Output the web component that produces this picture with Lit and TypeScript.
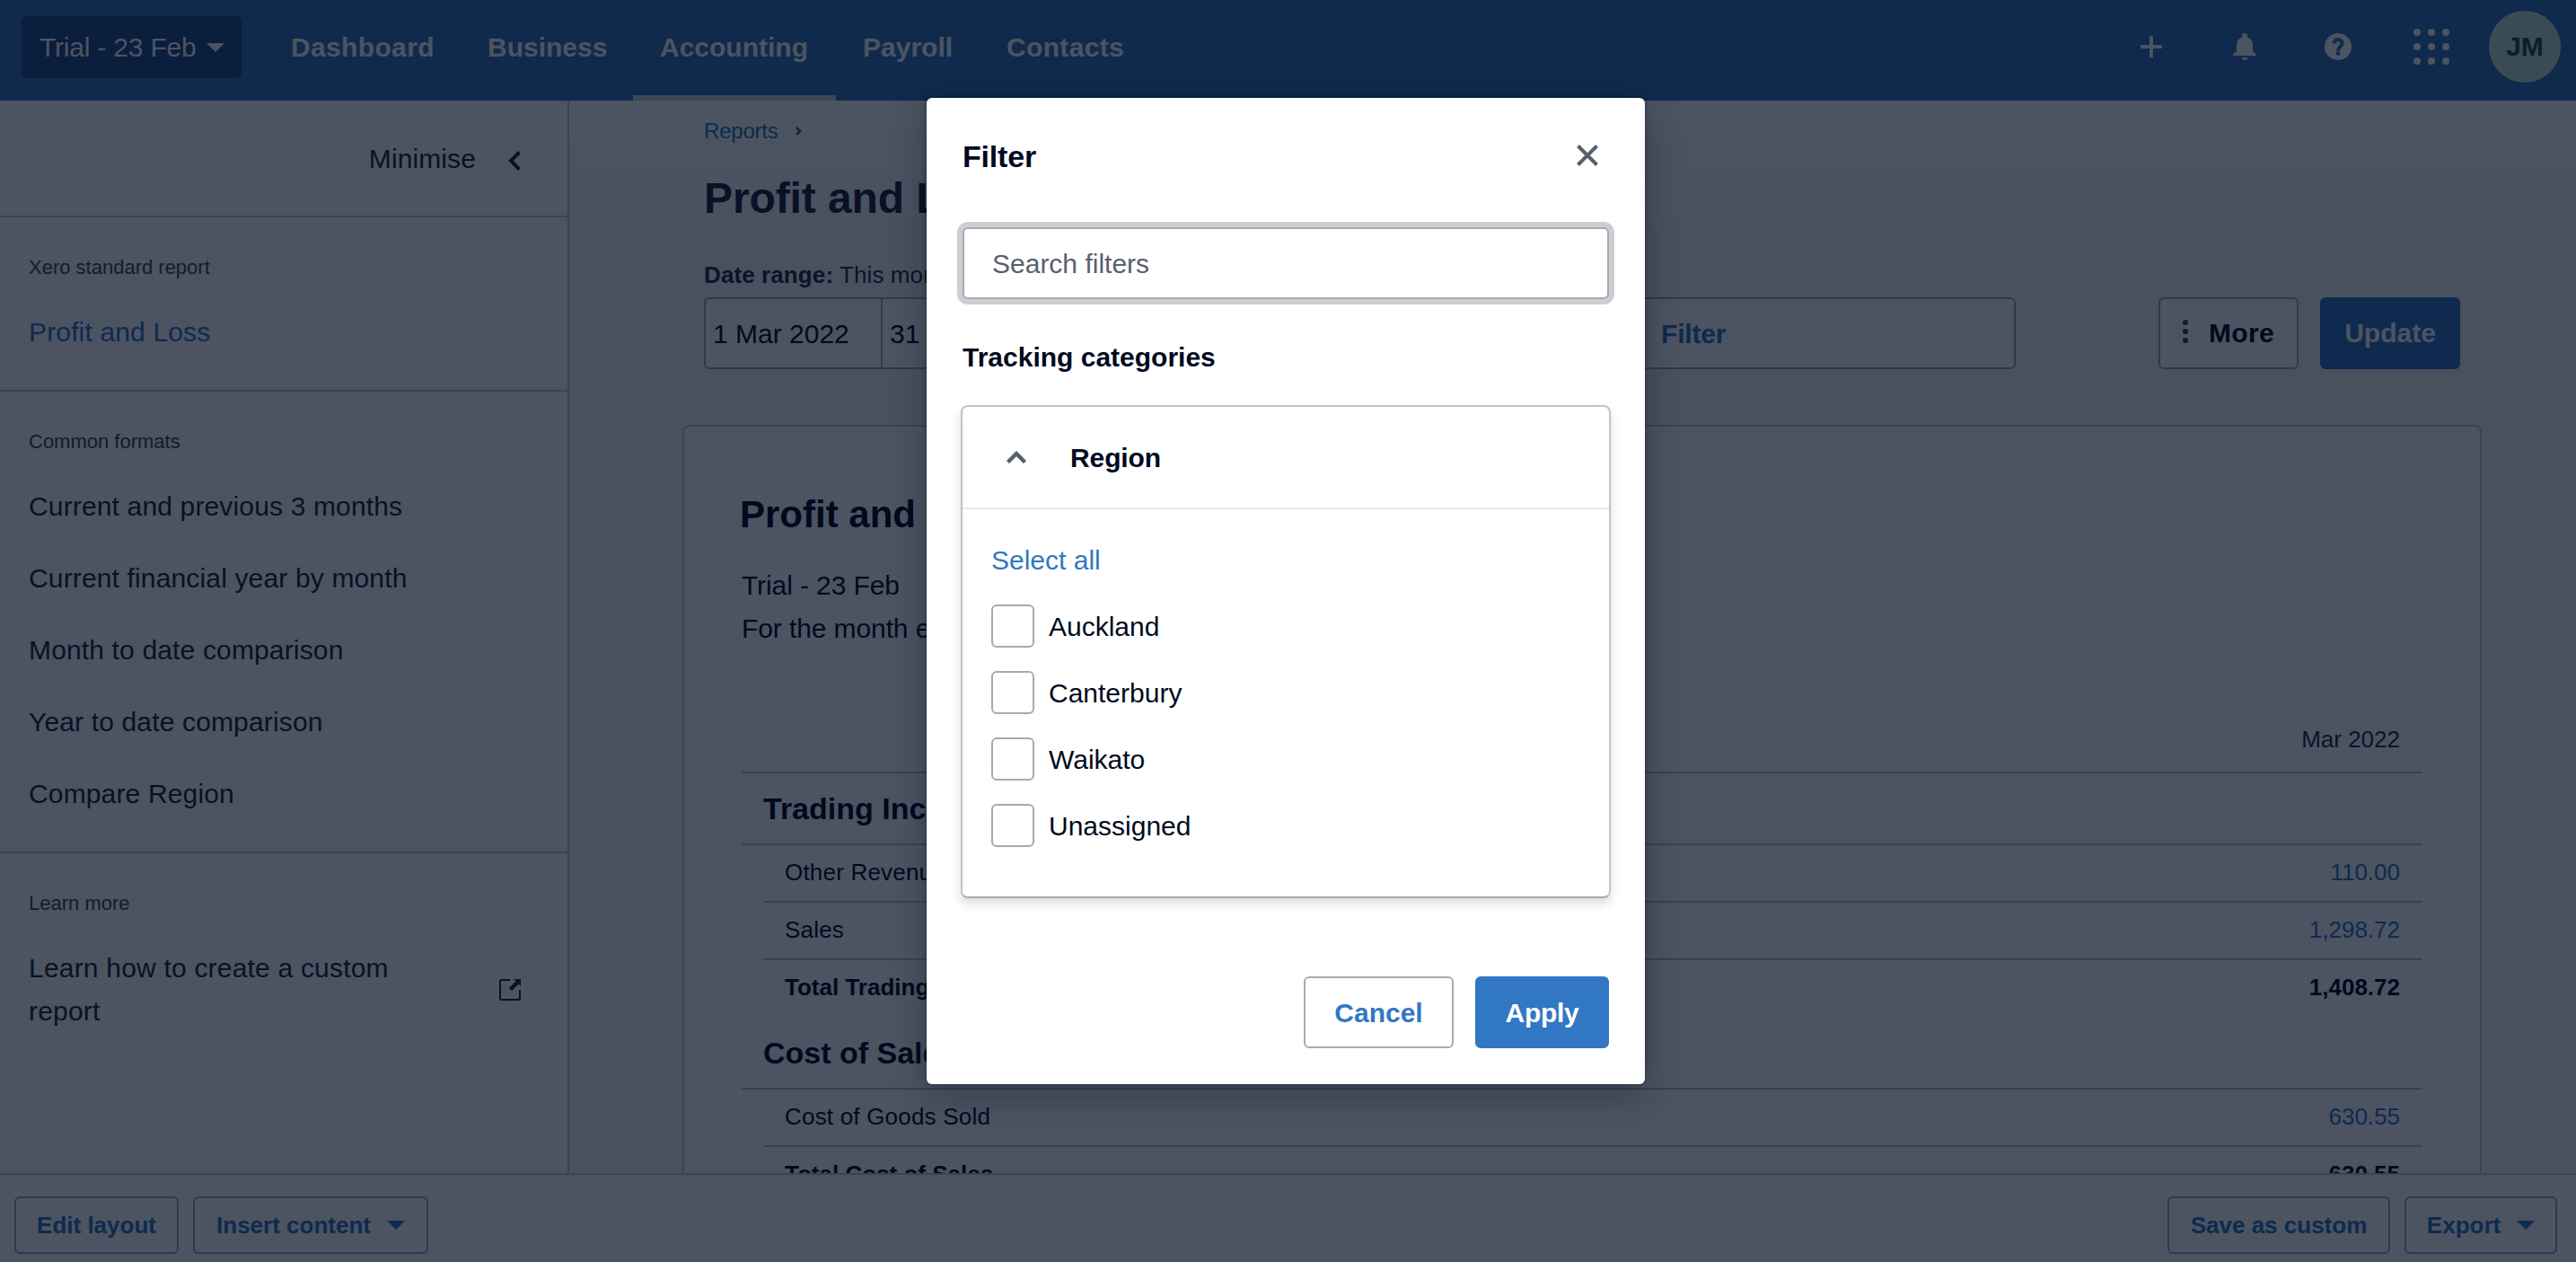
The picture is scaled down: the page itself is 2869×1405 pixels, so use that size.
import { LitElement, html, css, svg } from "lit";
import { customElement, property } from "lit/decorators.js";

const NAV = ["Dashboard", "Business", "Accounting", "Payroll", "Contacts"];

const FORMATS = [
	"Current and previous 3 months",
	"Current financial year by month",
	"Month to date comparison",
	"Year to date comparison",
	"Compare Region",
];

type Row = { kind: "section" | "line" | "total"; label: string; amount?: string };

const ROWS: Row[] = [
	{ kind: "section", label: "Trading Income" },
	{ kind: "line", label: "Other Revenue", amount: "110.00" },
	{ kind: "line", label: "Sales", amount: "1,298.72" },
	{ kind: "total", label: "Total Trading Income", amount: "1,408.72" },
	{ kind: "section", label: "Cost of Sales" },
	{ kind: "line", label: "Cost of Goods Sold", amount: "630.55" },
	{ kind: "total", label: "Total Cost of Sales", amount: "630.55" },
];

const REGIONS = ["Auckland", "Canterbury", "Waikato", "Unassigned"];

const caret = html`<svg class="caret" width="20" height="10" viewBox="0 0 20 10">
	<path d="M0 0h20L10 10z" fill="currentColor" />
</svg>`;

@customElement("filter-dialog")
export class FilterDialog extends LitElement {
	static override styles = css`
		:host {
			display: flex;
			flex-direction: column;
			box-sizing: border-box;
			width: 800px;
			height: 1098px;
			padding: 0 40px 40px;
			border-radius: 6px;
			background: #fff;
			color: #000a1e;
			font-size: 30px;
			box-shadow: 0 0 4px rgba(0, 10, 30, 0.4), 0 12px 40px rgba(0, 10, 30, 0.3);
		}
		header {
			display: flex;
			align-items: center;
			justify-content: space-between;
			height: 128px;
			padding-right: 12px;
		}
		h2 {
			margin: 0;
			padding-top: 2px;
			font-size: 34px;
			letter-spacing: -0.2px;
		}
		h3 {
			margin: 0;
			font-size: 30px;
			line-height: 40px;
			padding: 45px 0 33px;
		}
		.search {
			box-sizing: border-box;
			width: 720px;
			height: 80px;
			margin-top: 16px;
			padding: 2px 31px 0;
			border: 2px solid #a6a9b0;
			border-radius: 6px;
			outline: none;
			box-shadow: 0 0 0 6px #ccced2;
			background: #fff;
			font: inherit;
		}
		.search::placeholder {
			color: #59606d;
			opacity: 1;
		}
		.panel {
			width: 720px;
			height: 545px;
			margin-left: -2px;
			border: 2px solid #bfc2c8;
			border-bottom-color: #a6a9b0;
			border-radius: 8px;
			box-shadow: 0 6px 12px rgba(0, 10, 30, 0.14);
		}
		.summary {
			display: flex;
			align-items: center;
			gap: 49px;
			height: 112px;
			padding-left: 49px;
			border-bottom: 2px solid #e6e7e9;
			font-weight: bold;
			letter-spacing: -0.1px;
		}
		.name {
			padding-top: 2px;
		}
		.options {
			display: flex;
			flex-direction: column;
			padding: 37px 32px;
		}
		.all {
			color: #3277c4;
			line-height: 40px;
			margin-bottom: 16px;
		}
		label {
			display: flex;
			align-items: center;
			gap: 16px;
			height: 74px;
		}
		.box {
			box-sizing: border-box;
			width: 48px;
			height: 48px;
			border: 2px solid #a6a9b0;
			border-radius: 6px;
		}
		footer {
			display: flex;
			justify-content: flex-end;
			gap: 24px;
			margin-top: auto;
		}
		button {
			box-sizing: border-box;
			height: 80px;
			padding: 1px 0 0;
			border: 2px solid #a6a9b0;
			border-radius: 6px;
			background: #fff;
			color: #3277c4;
			font: bold 30px "Liberation Sans", Arial, sans-serif;
		}
		.cancel {
			width: 167px;
		}
		.apply {
			width: 149px;
			border-color: #3277c4;
			background: #3277c4;
			color: #fff;
			letter-spacing: -0.3px;
		}
	`;

	override render() {
		return html`
			<header>
				<h2>Filter</h2>
				<svg width="24" height="24" viewBox="0 0 24 24" fill="none" stroke="#59606d" stroke-width="4">
					<path d="M1.5 1.5l21 21M22.5 1.5l-21 21" />
				</svg>
			</header>
			<input class="search" placeholder="Search filters" />
			<h3>Tracking categories</h3>
			<section class="panel">
				<div class="summary">
					<svg width="22" height="14" viewBox="0 0 22 14" fill="none" stroke="#59606d" stroke-width="4.4">
						<path d="M1.5 12.5L11 3l9.5 9.5" />
					</svg>
					<span class="name">Region</span>
				</div>
				<div class="options">
					<span class="all">Select all</span>
					${REGIONS.map((r) => html`<label><span class="box"></span><span class="name">${r}</span></label>`)}
				</div>
			</section>
			<footer>
				<button class="cancel">Cancel</button>
				<button class="apply">Apply</button>
			</footer>
		`;
	}
}

@customElement("report-sidebar")
export class ReportSidebar extends LitElement {
	static override styles = css`
		:host {
			display: block;
			box-sizing: border-box;
			width: 634px;
			border-right: 2px solid #c4c8cf;
			background: #fff;
			color: #1e2532;
			font-size: 30px;
		}
		.minimise {
			display: flex;
			align-items: center;
			justify-content: flex-end;
			gap: 36px;
			height: 128px;
			padding-right: 52px;
		}
		.minimise span {
			padding-top: 2px;
			letter-spacing: 0.1px;
		}
		.minimise svg {
			margin-top: 6px;
		}
		section {
			border-top: 2px solid #c4c8cf;
			padding: 36px 32px 24px;
		}
		h4 {
			margin: 0 0 12px;
			color: #404756;
			font-size: 22px;
			font-weight: normal;
			line-height: 40px;
		}
		.item {
			display: flex;
			align-items: center;
			justify-content: space-between;
			line-height: 48px;
			padding: 16px 20px 16px 0;
			letter-spacing: 0.15px;
		}
		.active {
			color: #3277c4;
		}
		.text {
			width: 420px;
			letter-spacing: 0.2px;
		}
	`;

	@property({ type: Array })
	formats: string[] = [];

	override render() {
		return html`
			<div class="minimise">
				<span>Minimise</span>
				<svg width="14" height="22" viewBox="0 0 14 22" fill="none" stroke="#1e2532" stroke-width="4">
					<path d="M12.5 1.5L3 11l9.5 9.5" />
				</svg>
			</div>
			<section>
				<h4>Xero standard report</h4>
				<div class="item active">Profit and Loss</div>
			</section>
			<section>
				<h4>Common formats</h4>
				${this.formats.map((f) => html`<div class="item">${f}</div>`)}
			</section>
			<section>
				<h4>Learn more</h4>
				<div class="item">
					<span class="text">Learn how to create a custom report</span>
					<svg width="24" height="24" viewBox="0 0 24 24" fill="none" stroke="#1e2532">
						<path d="M12 1H3Q1 1 1 3v18q0 2 2 2h18q2 0 2-2v-9" stroke-width="2" />
						<path d="M12.500 11.500L20 4" stroke-width="4.400" />
						<path d="M16 0h8v8z" fill="#1e2532" stroke="none" />
					</svg>
				</div>
			</section>
		`;
	}
}

@customElement("app-root")
export class AppRoot extends LitElement {
	static override styles = css`
		:host {
			display: flex;
			flex-direction: column;
			position: relative;
			box-sizing: border-box;
			width: 2869px;
			height: 1405px;
			overflow: hidden;
			background: #fff;
			color: #000a1e;
			font-family: "Liberation Sans", Arial, sans-serif;
			font-size: 30px;
		}
		.topbar {
			display: flex;
			flex: none;
			align-items: center;
			height: 112px;
			padding: 0 17px 0 24px;
			background: #3576ba;
			box-sizing: border-box;
			color: #fff;
		}
		.org {
			display: flex;
			align-items: center;
			gap: 12px;
			box-sizing: border-box;
			width: 245px;
			height: 69px;
			margin: 0 25px 7px 0;
			padding: 1px 0 0 20px;
			border-radius: 6px;
			background: #234f87;
			letter-spacing: -0.2px;
			white-space: nowrap;
		}
		nav {
			display: grid;
			flex: 1;
			grid-template-columns: 219px 192px 226px 160px 190px;
			height: 112px;
			font-weight: bold;
		}
		nav span {
			box-sizing: border-box;
			padding-left: 30px;
			line-height: 106px;
			border-bottom: 6px solid transparent;
		}
		nav span:first-child,
		nav span:last-child {
			letter-spacing: 0.35px;
		}
		nav .on {
			border-color: #ced8e2;
		}
		.tools {
			display: flex;
			align-items: center;
			height: 80px;
			margin-bottom: 8px;
		}
		.tools svg {
			display: block;
		}
		.bell {
			margin-left: 79px;
		}
		.help {
			margin-left: 76px;
		}
		.grid {
			margin-left: 69px;
		}
		.avatar {
			width: 80px;
			margin-left: 44px;
			border-radius: 50%;
			background: #c2e6d0;
			color: #2b4d40;
			font-weight: bold;
			line-height: 80px;
			text-align: center;
		}
		.body {
			display: flex;
			height: 1194px;
			overflow: hidden;
		}
		report-sidebar {
			flex: none;
		}
		main {
			flex: 1;
			padding: 0 105px 0 126px;
			background: linear-gradient(#fff, #f3f4f6 180px);
		}
		.head {
			padding: 0 24px;
		}
		.crumb {
			display: flex;
			align-items: center;
			gap: 19px;
			height: 68px;
			color: #1f7fb0;
			font-size: 24px;
			letter-spacing: -0.2px;
		}
		h1 {
			margin: 0;
			color: #1e2532;
			font-size: 48px;
			line-height: 82px;
			letter-spacing: -0.1px;
		}
		.range {
			color: #262e46;
			font-size: 26px;
			line-height: 40px;
			padding: 24px 0 5px;
			letter-spacing: 0.1px;
		}
		.controls {
			display: flex;
			height: 80px;
			margin-bottom: 62px;
		}
		.fields {
			display: flex;
			box-sizing: border-box;
			width: 1461px;
			margin-right: 159px;
			border: 2px solid #a6a9b0;
			border-radius: 6px;
			background: #fff;
			line-height: 77px;
		}
		.fields span {
			box-sizing: border-box;
			padding-left: 8px;
			border-right: 2px solid #a6a9b0;
		}
		.from {
			width: 197px;
		}
		.to {
			width: 720px;
		}
		.fields .filter {
			padding-left: 147px;
			border: 0;
			color: #3277c4;
			font-weight: bold;
			letter-spacing: -0.2px;
		}
		.btn {
			display: flex;
			align-items: center;
			justify-content: center;
			box-sizing: border-box;
			border: 2px solid #a6a9b0;
			border-radius: 6px;
			background: #fff;
			font-weight: bold;
			white-space: nowrap;
		}
		.more {
			width: 156px;
			gap: 23px;
			margin-right: 24px;
			letter-spacing: 0.3px;
		}
		.more svg {
			margin-bottom: 4px;
		}
		.update {
			width: 156px;
			border-color: #3277c4;
			background: #3277c4;
			color: #fff;
		}
		.card {
			box-sizing: border-box;
			width: 2004px;
			height: 1000px;
			padding: 64px 64px 0;
			border: 2px solid #c4c8cf;
			border-radius: 8px;
			background: #fff;
		}
		h2 {
			margin: 0 0 21px -2px;
			font-size: 42px;
			line-height: 68px;
		}
		.meta {
			line-height: 48px;
			letter-spacing: -0.1px;
		}
		.table {
			font-size: 26px;
		}
		.month {
			box-sizing: border-box;
			height: 53px;
			margin-top: 84px;
			padding-right: 25px;
			border-bottom: 2px solid #c0c3ca;
			color: #262e46;
			line-height: 30px;
			text-align: right;
		}
		.section {
			box-sizing: border-box;
			height: 80px;
			padding-left: 24px;
			border-bottom: 2px solid #c0c3ca;
			font-size: 34px;
			font-weight: bold;
			line-height: 78px;
		}
		.line,
		.total {
			display: flex;
			justify-content: space-between;
			box-sizing: border-box;
			height: 64px;
			margin-left: 24px;
			padding: 0 25px 0 24px;
			line-height: 61px;
		}
		.line {
			border-bottom: 2px solid #c0c3ca;
		}
		.line span {
			letter-spacing: 0.2px;
		}
		.line b {
			color: #3277c4;
			font-weight: normal;
		}
		.total {
			font-weight: bold;
		}
		.bottombar {
			display: flex;
			flex: none;
			align-items: flex-start;
			gap: 16px;
			box-sizing: border-box;
			height: 99px;
			padding: 24px 21px 0 16px;
			border-top: 2px solid #c4c8cf;
			background: #fff;
			color: #3277c4;
			font-size: 26px;
		}
		.bottombar .btn {
			height: 64px;
			gap: 18px;
		}
		.edit {
			width: 183px;
		}
		.insert {
			width: 262px;
			margin-right: auto;
		}
		.save {
			width: 248px;
		}
		.export {
			width: 170px;
		}
		.overlay {
			position: absolute;
			inset: 0;
			background: rgba(0, 10, 30, 0.7);
		}
		filter-dialog {
			position: absolute;
			left: 1032px;
			top: 109px;
		}
	`;

	private renderTools() {
		return html`
			<div class="tools">
				<svg width="24" height="24" viewBox="0 0 24 24"><path d="M10 0h4v10h10v4H14v10h-4V14H0v-4h10z" fill="#fff" /></svg>
				<svg class="bell" width="26" height="30" viewBox="0 0 26 30" fill="#fff">
					<path d="M13 0a3 3 0 0 1 3 3v1.500c4 1.300 6 4.500 6 8.500v7l4 3.500V25H0v-1.500L4 20v-7c0-4 2-7.200 6-8.500V3a3 3 0 0 1 3-3z" />
					<path d="M10 27h6a3 3 0 0 1-6 0z" />
				</svg>
				<svg class="help" width="30" height="30" viewBox="0 0 30 30">
					<circle cx="15" cy="15" r="15" fill="#fff" />
					<path d="M10.800 11.500C10.800 8.500 12.600 7 15 7s4.500 1.700 4.500 4.300c0 3.700-4.500 3.700-4.500 8.200" fill="none" stroke="#3576ba" stroke-width="4" />
					<rect x="13" y="20.500" width="4" height="4" fill="#3576ba" />
				</svg>
				<svg class="grid" width="40" height="40" viewBox="0 0 40 40" fill="#fff">
					${[4, 20, 36].map((y) => [4, 20, 36].map((x) => svg`<circle cx=${x} cy=${y} r="4" />`))}
				</svg>
				<div class="avatar">JM</div>
			</div>
		`;
	}

	private renderRow(row: Row) {
		if (row.kind === "section") return html`<div class="section">${row.label}</div>`;
		return html`<div class=${row.kind}><span>${row.label}</span><b>${row.amount}</b></div>`;
	}

	override render() {
		return html`
			<div class="topbar">
				<div class="org">Trial - 23 Feb ${caret}</div>
				<nav>${NAV.map((n) => html`<span class=${n === "Accounting" ? "on" : ""}>${n}</span>`)}</nav>
				${this.renderTools()}
			</div>
			<div class="body">
				<report-sidebar .formats=${FORMATS}></report-sidebar>
				<main>
					<div class="head">
						<div class="crumb">
							Reports
							<svg width="7" height="10" viewBox="0 0 7 10" fill="none" stroke="#59606d" stroke-width="2.600">
								<path d="M1 1l4 4-4 4" />
							</svg>
						</div>
						<h1>Profit and Loss</h1>
						<div class="range"><b>Date range:</b> This month</div>
						<div class="controls">
							<div class="fields">
								<span class="from">1 Mar 2022</span>
								<span class="to">31 Mar 2022</span>
								<span class="filter">Filter</span>
							</div>
							<div class="btn more">
								<svg width="6" height="26" viewBox="0 0 6 26" fill="#404756">
									<circle cx="3" cy="3" r="3" />
									<circle cx="3" cy="13" r="3" />
									<circle cx="3" cy="23" r="3" />
								</svg>
								More
							</div>
							<div class="btn update">Update</div>
						</div>
					</div>
					<div class="card">
						<h2>Profit and Loss</h2>
						<div class="meta">Trial - 23 Feb<br />For the month ended 31 March 2022</div>
						<div class="table">
							<div class="month">Mar 2022</div>
							${ROWS.map((r) => this.renderRow(r))}
						</div>
					</div>
				</main>
			</div>
			<div class="bottombar">
				<div class="btn edit">Edit layout</div>
				<div class="btn insert">Insert content ${caret}</div>
				<div class="btn save">Save as custom</div>
				<div class="btn export">Export ${caret}</div>
			</div>
			<div class="overlay"></div>
			<filter-dialog></filter-dialog>
		`;
	}
}
